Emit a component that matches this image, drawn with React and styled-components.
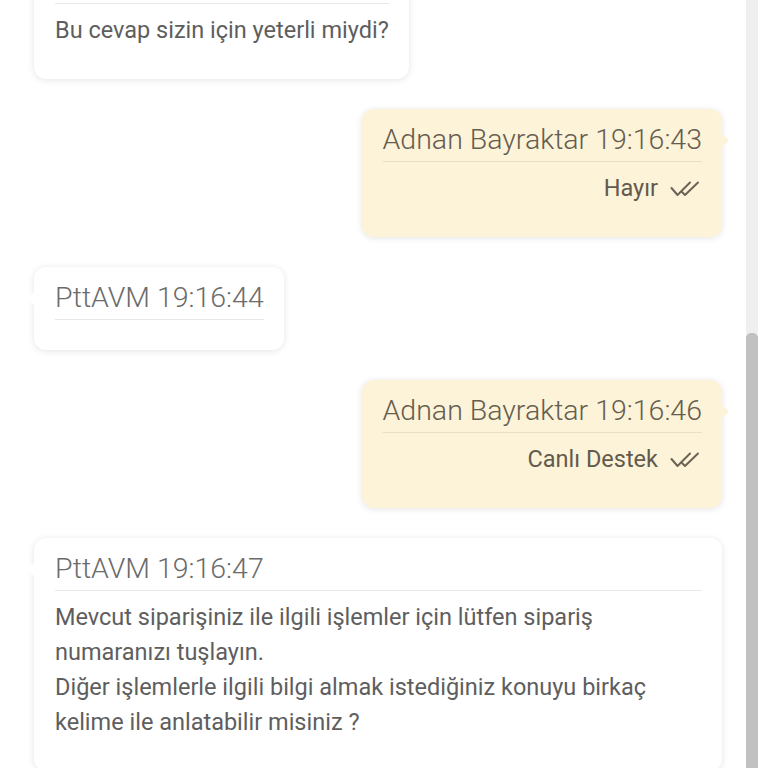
import React from "react";
import styled, { createGlobalStyle } from "styled-components";

const GlobalStyle = createGlobalStyle`
  html, body {
    margin: 0;
    padding: 0;
    background: #ffffff;
    font-family: Roboto, "Liberation Sans", sans-serif;
  }
`;

const messages = [
  {
    id: 1,
    mine: false,
    author: "PttAVM",
    time: "19:16:42",
    lines: ["Bu cevap sizin için yeterli miydi?"],
  },
  {
    id: 2,
    mine: true,
    author: "Adnan Bayraktar",
    time: "19:16:43",
    lines: ["Hayır"],
  },
  { id: 3, mine: false, author: "PttAVM", time: "19:16:44", lines: [] },
  {
    id: 4,
    mine: true,
    author: "Adnan Bayraktar",
    time: "19:16:46",
    lines: ["Canlı Destek"],
  },
  {
    id: 5,
    mine: false,
    author: "PttAVM",
    time: "19:16:47",
    lines: [
      "Mevcut siparişiniz ile ilgili işlemler için lütfen sipariş numaranızı tuşlayın.",
      "Diğer işlemlerle ilgili bilgi almak istediğiniz konuyu birkaç kelime ile anlatabilir misiniz ?",
    ],
  },
];

const DoubleCheck = () => (
  <CheckIcon viewBox="0 0 32 18" aria-hidden="true">
    <polyline points="1.5,8 7.5,15 20,2.5" />
    <polyline points="12,12 15,15 28,2.5" />
  </CheckIcon>
);

const Message = ({ mine, author, time, lines }) => (
  <Bubble mine={mine}>
    <Header mine={mine}>
      {author} {time}
    </Header>
    <Body>
      {lines.length > 0 && (
        <BodyText mine={mine}>
          {lines.map((line, i) => (
            <div key={i}>{line}</div>
          ))}
          {mine && <DoubleCheck />}
        </BodyText>
      )}
    </Body>
  </Bubble>
);

const App = () => {
  return (
    <Page>
      <GlobalStyle />
      <ChatColumn>
        <MessageList>
          {messages.map((m) => (
            <Message key={m.id} {...m} />
          ))}
        </MessageList>
      </ChatColumn>
      <ScrollTrack>
        <ScrollThumb />
      </ScrollTrack>
    </Page>
  );
};

export default App;

const Page = styled.div`
  display: flex;
  height: 768px;
  overflow: hidden;
  background: #ffffff;
`;

const ChatColumn = styled.div`
  width: 746px;
  flex: none;
  box-sizing: border-box;
  padding: 0 24px 0 34px;
  overflow: hidden;
`;

const MessageList = styled.div`
  display: flex;
  flex-direction: column;
  gap: 30px;
  margin-top: -49px;
`;

const Bubble = styled.div`
  position: relative;
  align-self: ${(p) => (p.mine ? "flex-end" : "flex-start")};
  max-width: 100%;
  box-sizing: border-box;
  padding: 0 20px 0 21px;
  border-radius: 12px;
  background: ${(p) => (p.mine ? "#fdf3d8" : "#ffffff")};
  box-shadow: 0 1px 7px rgba(0, 0, 0, 0.11);

  &::before {
    content: "";
    position: absolute;
    top: 27px;
    ${(p) => (p.mine ? "right: -5px;" : "left: -5px;")}
    width: 9px;
    height: 9px;
    background: ${(p) => (p.mine ? "#fdf3d8" : "#ffffff")};
    transform: rotate(45deg);
  }
`;

const Header = styled.div`
  position: relative;
  padding: 13px 0 3px;
  border-bottom: 1px solid ${(p) => (p.mine ? "#ebdfc2" : "#e8e8e8")};
  font-size: 28.5px;
  font-weight: 300;
  line-height: 36px;
  color: ${(p) => (p.mine ? "#655d50" : "#6b6b6b")};
  white-space: nowrap;
`;

const Body = styled.div`
  padding: 9px 0 31px;

  &:empty {
    padding: 0;
    height: 30px;
  }
`;

const BodyText = styled.div`
  font-size: 23.5px;
  line-height: 35px;
  color: ${(p) => (p.mine ? "#625a4d" : "#5e5e5e")};
  display: ${(p) => (p.mine ? "flex" : "block")};
  justify-content: flex-end;
  align-items: center;
  gap: 12px;
`;

const CheckIcon = styled.svg`
  width: 32px;
  height: 18px;
  flex: none;
  fill: none;
  stroke: #6b6355;
  stroke-width: 2;
  stroke-linecap: round;
  stroke-linejoin: round;
`;

const ScrollTrack = styled.div`
  width: 12px;
  flex: none;
  display: flex;
  flex-direction: column;
  background: #efefef;
`;

const ScrollThumb = styled.div`
  flex: 1;
  margin-top: 333px;
  border-radius: 5px 5px 0 0;
  background: #c1c1c1;
`;
